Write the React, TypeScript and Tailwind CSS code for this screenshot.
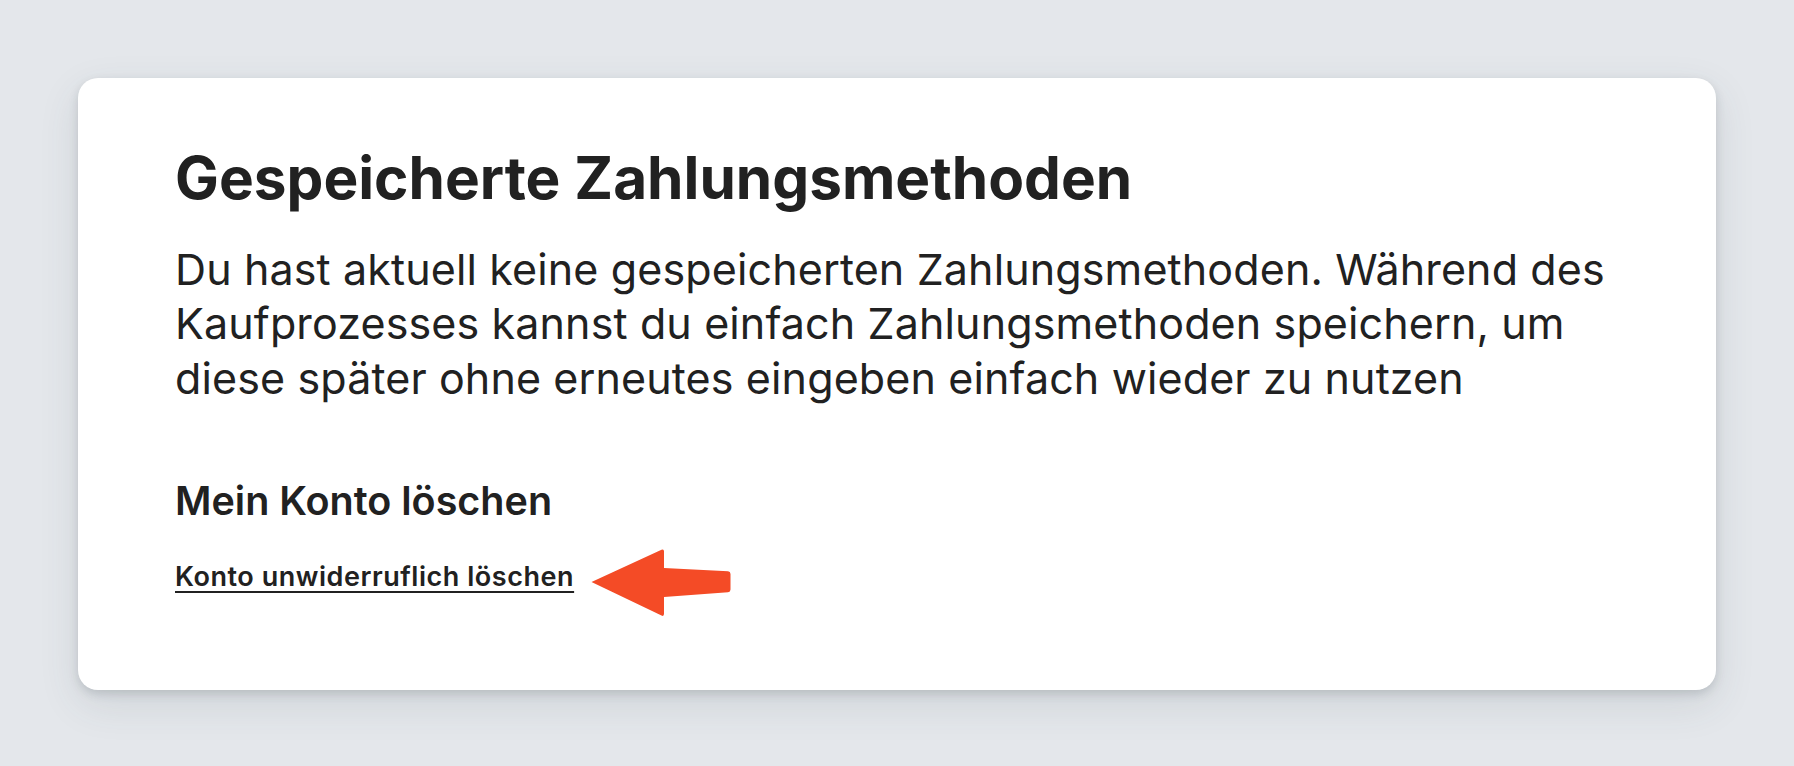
const Arrow = () => (
    <svg width="142" height="70" viewBox="0 0 142 70" className="shrink-0 -mt-[15px] ml-[16px]">
        <path
            d="M1.5 34 L71.5 1.8 Q74 0.8 74 3.5 L74 20 L138 23.2 Q140.5 23.5 140.5 26 L140.5 41.5 Q140.5 44 138 44.2 L74 49 L74 65.8 Q74 68.8 71.5 67.6 Z"
            fill="#f44b26"
        />
    </svg>
);

export default function App() {
    return (
        <div className="min-h-screen bg-[#e4e7eb] p-[78px] font-['Inter','Liberation_Sans',sans-serif] text-[#212121]">
            <div className="bg-white rounded-[20px] shadow-[0_4px_10px_rgba(60,70,80,0.18),0_14px_40px_rgba(60,70,80,0.12)] pl-[97px] pr-[80px] pt-[71px] pb-[72px]">
                <h1 className="text-[58.5px] leading-none font-bold">
                    Gespeicherte Zahlungsmethoden
                </h1>
                <p className="mt-[34px] text-[43px] leading-[54.5px] font-normal tracking-[0.003em]">
                    Du hast aktuell keine gespeicherten Zahlungsmethoden. Während des Kaufprozesses kannst du einfach Zahlungsmethoden speichern, um diese später ohne erneutes eingeben einfach wieder zu nutzen
                </p>
                <h2 className="mt-[77px] text-[39.5px] leading-none font-semibold">
                    Mein Konto löschen
                </h2>
                <div className="mt-[41px] flex items-start">
                    <a href="#" className="text-[27px] leading-none font-semibold tracking-[0.02em] underline underline-offset-[5px] decoration-[1.5px]">
                        Konto unwiderruflich löschen
                    </a>
                    <Arrow />
                </div>
            </div>
        </div>
    );
}
